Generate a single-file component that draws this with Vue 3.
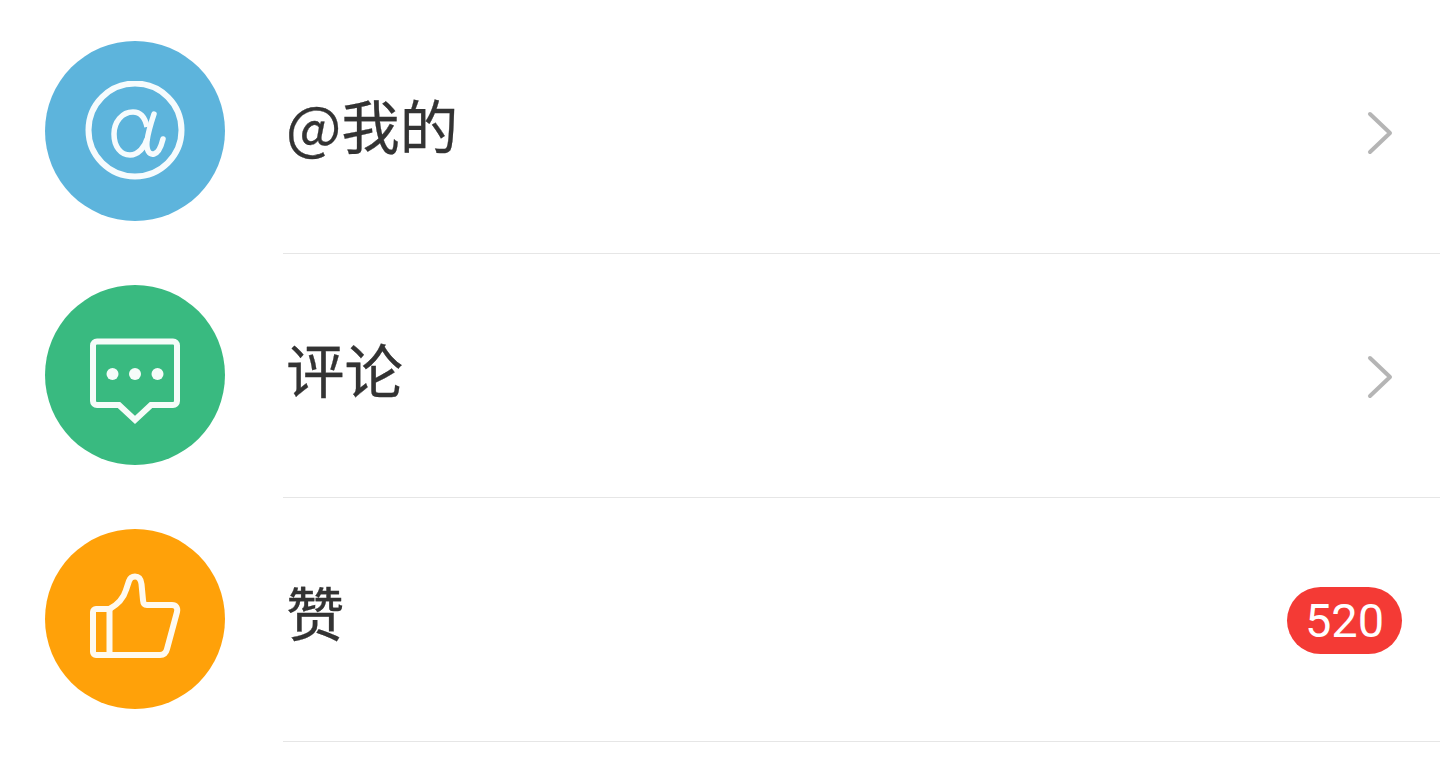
<template>
  <div class="list">
    <div v-for="item in items" :key="item.id" class="row">
      <div class="avatar" :class="item.id">
        <svg v-if="item.id === 'at'" viewBox="0 0 100 100" width="100" height="100">
          <circle cx="50" cy="49" r="46.500" fill="none" stroke="#f6fbfd" stroke-width="6" />
          <path d="M69 33 C66 42 63 52 62 60 C61 69 64 74 69 73 C73 72 76 66 78 58" fill="none" stroke="#f6fbfd" stroke-width="5.500" stroke-linecap="round" />
          <path d="M62 46 C60 36 55 31 48 31 C37 31 29 41 29 53 C29 66 36 74 45 74 C53 74 60 66 62 58" fill="none" stroke="#f6fbfd" stroke-width="5.500" />
        </svg>
        <svg v-else-if="item.id === 'comment'" viewBox="0 0 100 100" width="100" height="100">
          <path d="M12 16.500 H88 A4 4 0 0 1 92 20.500 V76 A4 4 0 0 1 88 80 H66 L50 95 L34 80 H12 A4 4 0 0 1 8 76 V20.500 A4 4 0 0 1 12 16.500 Z" fill="none" stroke="#f6fcf9" stroke-width="6" />
          <circle cx="27.500" cy="49" r="6" fill="#f6fcf9" />
          <circle cx="50" cy="49" r="6" fill="#f6fcf9" />
          <circle cx="72.500" cy="49" r="6" fill="#f6fcf9" />
        </svg>
        <svg v-else viewBox="0 0 100 100" width="100" height="100">
          <path d="M24.500 40 C30 37 38 31 41 21 L44 12 C45 9 47 7.500 50 7.500 C54 7.500 56 11 56.500 15 L58 31 C58.200 34 59 36 62 36 H87 C91 36 93 39 92 43 L82 80 C81 84 78 86 75 86 H11 A3 3 0 0 1 8 83 V43 A3 3 0 0 1 11 40 Z" fill="none" stroke="#fffaf0" stroke-width="6" stroke-linejoin="round" />
          <path d="M24.500 40 V86" fill="none" stroke="#fffaf0" stroke-width="6" />
        </svg>
      </div>
      <div class="body">
        <span class="title" :class="{ raised: item.badge }">{{ item.title }}</span>
        <span v-if="item.badge" class="badge">{{ item.badge }}</span>
        <svg v-else class="arrow" viewBox="0 0 28 44" width="28" height="44">
          <path d="M5 3 L25 22 L5 41" fill="none" stroke="#b5b5b5" stroke-width="4" stroke-linecap="round" stroke-linejoin="round" />
        </svg>
      </div>
    </div>
  </div>
</template>

<script setup>
const items = [
  { id: "at", title: "@我的" },
  { id: "comment", title: "评论" },
  { id: "like", title: "赞", badge: 520 },
];
</script>

<style>
html,
body {
  background: #fff;
  overflow: hidden;
}
</style>

<style scoped>
.list {
  padding-top: 10px;
  font-family: "Noto Sans CJK SC", "Noto Sans", sans-serif;
}
.row {
  display: flex;
  align-items: center;
  height: 244px;
  padding-left: 45px;
  box-sizing: border-box;
}
.avatar {
  flex: none;
  display: flex;
  align-items: center;
  justify-content: center;
  width: 180px;
  height: 180px;
  margin: -2px 58px 0 0;
  border-radius: 50%;
}
.at {
  background: #5db4dc;
}
.comment {
  background: #39ba80;
}
.like {
  background: #ffa109;
}
.body {
  flex: 1;
  display: flex;
  align-items: center;
  justify-content: space-between;
  height: 100%;
  padding: 0 38px 0 3px;
  border-bottom: 1px solid #e6e6e6;
  box-sizing: border-box;
}
.title {
  margin-top: -16px;
  font-size: 58.500px;
  line-height: 80px;
  color: #333;
  -webkit-text-stroke: 0.3px #333;
}
.title.raised {
  margin-top: -18px;
}
.badge {
  display: flex;
  align-items: center;
  justify-content: center;
  width: 115px;
  height: 67px;
  margin-top: 2px;
  border-radius: 34px;
  background: #f43a35;
  color: #fff;
  font-size: 47px;
  font-family: Roboto, "Noto Sans", sans-serif;
}
.arrow {
  margin: 2px 9px 0 0;
}
</style>
